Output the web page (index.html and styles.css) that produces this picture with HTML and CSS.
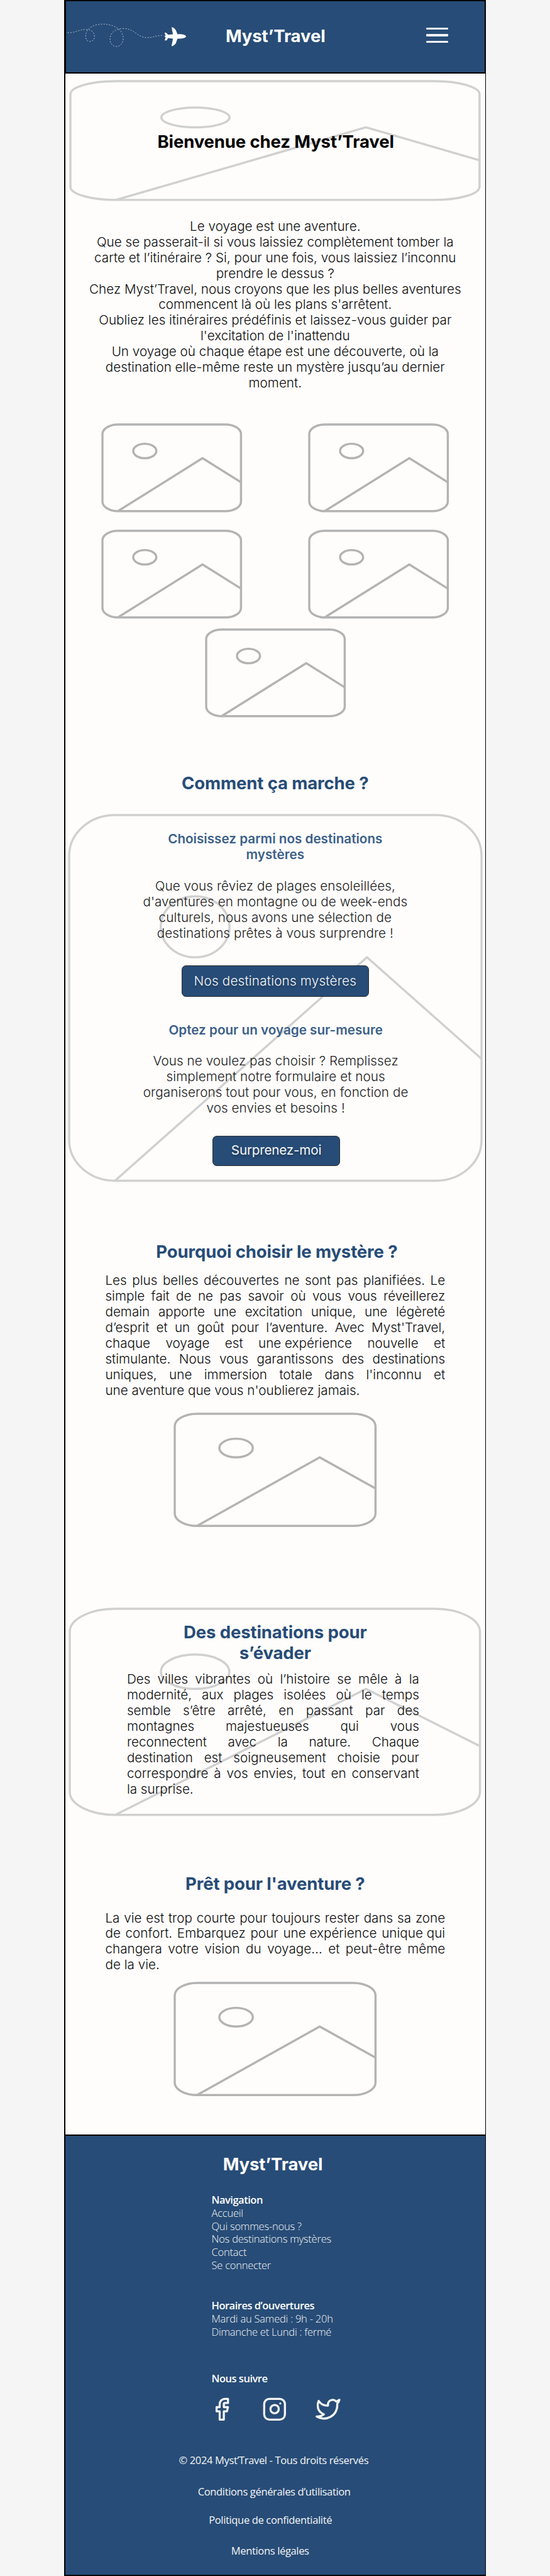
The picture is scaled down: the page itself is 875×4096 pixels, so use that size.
FILE: index.html
```html
<!DOCTYPE html>
<html lang="fr">
<head>
<meta charset="utf-8">
<title>Myst’Travel</title>
<link rel="stylesheet" href="styles.css">
</head>
<body>
<svg class="sprite" aria-hidden="true">
  <symbol id="picture" viewBox="3 3 18 18" preserveAspectRatio="none" overflow="visible">
    <rect x="3" y="3" width="18" height="18" rx="2" ry="2"/>
    <circle cx="8.5" cy="8.5" r="1.5"/>
    <polyline points="21 15 16 10 5 21"/>
  </symbol>
</svg>
<div class="page">
  <header class="header">
    <svg class="flight" viewBox="18 0 702 210" aria-hidden="true">
      <path class="trail" d="M12 88C60 98 85 74 125 73C160 71 176 90 176 112C176 130 164 140 149 139C134 138 126 126 127 109C128 60 180 42 228 43C280 45 334 70 335 122C334 150 318 168 297 167C274 166 262 148 262 124C264 90 290 68 340 67C395 68 415 118 468 118C500 118 515 107 550 106"/>
      <path class="plane" d="M684 111C682 119 665 125 636 124L630 140L627 150L620 157L610 165L603 165L611 124L584 120L576 133L565 133L570 117L568 112L561 111L568 108L570 106L564 91L573 91L584 102L611 99L603 61L610 61L620 68L627 77L630 84L636 99C665 98 680 103 684 111Z"/>
    </svg>
    <div class="logo">Myst’Travel</div>
    <div class="burger"><i></i><i></i><i></i></div>
  </header>

  <main>
    <section class="framed hero">
      <svg class="picture"><use href="#picture"/></svg>
      <h1>Bienvenue chez Myst’Travel</h1>
    </section>

    <p class="intro">Le voyage est une aventure.<br>Que se passerait-il si vous laissiez complètement tomber la<br>carte et l’itinéraire ? Si, pour une fois, vous laissiez l’inconnu<br>prendre le dessus ?<br>Chez Myst’Travel, nous croyons que les plus belles aventures<br>commencent là où les plans s'arrêtent.<br>Oubliez les itinéraires prédéfinis et laissez-vous guider par<br>l'excitation de l'inattendu<br>Un voyage où chaque étape est une découverte, où la<br>destination elle-même reste un mystère jusqu’au dernier<br>moment.</p>

    <div class="gallery">
      <div class="thumb"><svg class="picture"><use href="#picture"/></svg></div>
      <div class="thumb"><svg class="picture"><use href="#picture"/></svg></div>
      <div class="thumb"><svg class="picture"><use href="#picture"/></svg></div>
      <div class="thumb"><svg class="picture"><use href="#picture"/></svg></div>
      <div class="thumb last"><svg class="picture"><use href="#picture"/></svg></div>
    </div>

    <h2 class="how-title">Comment ça marche ?</h2>
    <section class="framed how">
      <svg class="picture"><use href="#picture"/></svg>
      <h3>Choisissez parmi nos destinations<br>mystères</h3>
      <p>Que vous rêviez de plages ensoleillées,<br>d'aventures en montagne ou de week-ends<br>culturels, nous avons une sélection de<br>destinations prêtes à vous surprendre !</p>
      <a class="button wide">Nos destinations mystères</a>
      <h3 class="custom">Optez pour un voyage sur-mesure</h3>
      <p class="custom">Vous ne voulez pas choisir ? Remplissez<br>simplement notre formulaire et nous<br>organiserons tout pour vous, en fonction de<br>vos envies et besoins !</p>
      <a class="button narrow">Surprenez-moi</a>
    </section>

    <section class="why">
      <h2>Pourquoi choisir le mystère ?</h2>
      <p class="justified">Les plus belles découvertes ne sont pas planifiées. Le simple fait de ne pas savoir où vous vous réveillerez demain apporte une excitation unique, une légèreté d’esprit et un goût pour l’aventure. Avec Myst'Travel, chaque voyage est <span class="tied">une expérience</span> nouvelle et stimulante. Nous vous garantissons des destinations uniques, une immersion totale dans l'inconnu et une&nbsp;aventure que vous n'oublierez jamais.</p>
      <div class="photo"><svg class="picture"><use href="#picture"/></svg></div>
    </section>

    <section class="framed escape">
      <svg class="picture"><use href="#picture"/></svg>
      <h2>Des destinations pour<br>s’évader</h2>
      <p class="justified"><span class="line">Des villes vibrantes où l’histoire se mêle à la</span> <span class="line">modernité, aux plages isolées où le temps</span> <span class="line">semble s’être arrêté, en passant par des</span> <span class="line">montagnes majestueuses qui vous</span> <span class="line">reconnectent avec la nature. Chaque</span> <span class="line">destination est soigneusement choisie pour</span> <span class="line">correspondre à vos envies, tout en conservant</span> la surprise.</p>
    </section>

    <section class="ready">
      <h2>Prêt pour l'aventure ?</h2>
      <p class="justified">La vie est trop courte pour toujours rester dans sa zone de confort. Embarquez pour <span class="tied">une expérience</span> <span class="tied">unique qui</span> changera votre vision du voyage… et peut-être même de la vie.</p>
      <div class="photo"><svg class="picture"><use href="#picture"/></svg></div>
    </section>
  </main>

  <footer class="footer">
    <div class="logo">Myst’Travel</div>
    <ul class="links">
      <li class="heading">Navigation</li>
      <li>Accueil</li>
      <li>Qui sommes-nous ?</li>
      <li>Nos destinations mystères</li>
      <li>Contact</li>
      <li>Se connecter</li>
    </ul>
    <ul class="links hours">
      <li class="heading">Horaires d’ouvertures</li>
      <li>Mardi au Samedi : 9h - 20h</li>
      <li>Dimanche et Lundi : fermé</li>
    </ul>
    <ul class="links follow"><li class="heading">Nous suivre</li></ul>
    <div class="social">
      <svg viewBox="0 0 24 24"><path d="M18 2h-3a5 5 0 0 0-5 5v3H7v4h3v8h4v-8h3l1-4h-4V7a1 1 0 0 1 1-1h3z"/></svg>
      <svg viewBox="0 0 24 24"><rect x="2" y="2" width="20" height="20" rx="5"/><path d="M16 11.37A4 4 0 1 1 12.63 8 4 4 0 0 1 16 11.37zM17.5 6.5h.01"/></svg>
      <svg viewBox="0 0 24 24"><path d="M23 3a10.9 10.9 0 0 1-3.14 1.53 4.48 4.48 0 0 0-7.86 3v1A10.66 10.66 0 0 1 3 4s-4 9 5 13a11.64 11.64 0 0 1-7 2c9 5 20 0 20-11.5a4.5 4.5 0 0 0-.08-.83A7.72 7.72 0 0 0 23 3z"/></svg>
    </div>
    <p class="legal copyright">© 2024 Myst’Travel - Tous droits réservés</p>
    <p class="legal terms">Conditions générales d’utilisation</p>
    <p class="legal privacy">Politique de confidentialité</p>
    <p class="legal mentions">Mentions légales</p>
  </footer>
</div>
</body>
</html>
```
FILE: styles.css
```css
/* 1rem is ten design units */
html { font-size: 8.61px; }
* { box-sizing: border-box; margin: 0; padding: 0; }
body {
  background: #f5f5f5;
  color: #0c0c0c;
  font: 300 2.4rem/2.9rem Inter, "Liberation Sans", sans-serif;
}
.sprite { position: absolute; width: 0; height: 0; }

.page {
  width: 77.9rem;
  height: 4096px;
  margin-left: 11.9rem;
  background: #fefdfc;
  border: solid #000;
  border-width: 0 1px 0 2px;
  display: flex;
  flex-direction: column;
}
main { display: flex; flex-direction: column; align-items: center; text-align: center; margin-left: -1px; }
h1, h2, .logo { font-weight: 700; font-size: 3.2rem; line-height: 3.9rem; letter-spacing: -.005em; }
h1 { color: #000; }
h2 { color: #274c77; }
h3 { color: #3b6089; font-weight: 600; font-size: 2.4rem; line-height: 2.9rem; }

.header {
  height: 13.6rem;
  margin: 0 -1px 0 -2px;
  padding: 0 6.8rem .6rem 0;
  border: 2px solid #000;
  border-left-width: 3px;
  background: #274c77;
  display: flex;
  align-items: center;
}
.flight { width: 23.4rem; height: 7rem; flex: none; }
.trail { fill: none; stroke: #e3e8ee; stroke-width: 2.6; stroke-dasharray: 7 8; }
.plane { fill: #fff; }
.logo { color: #fff; }
.header .logo { margin-left: 6.05rem; padding-top: .36rem; }
.burger { margin-left: auto; width: 4rem; display: grid; gap: .8rem; }
.burger i { height: .4rem; border-radius: .15rem; background: #f5f5f5; }

.picture {
  display: block;
  width: 100%;
  height: 100%;
  overflow: visible;
  fill: none;
  stroke: #b3b3b3;
  stroke-width: .4rem;
  stroke-linecap: butt;
  stroke-linejoin: round;
}
#picture * { vector-effect: non-scaling-stroke; }

/* Sections whose content lies over a picture */
.framed { position: relative; display: flex; flex-direction: column; align-items: center; }
.framed > .picture {
  position: absolute;
  inset: .2rem;
  width: calc(100% - .4rem);
  height: calc(100% - .4rem);
  stroke: #d0d0d0;
}
.framed > :not(.picture) { position: relative; }

.hero { width: 76rem; height: 22.34rem; margin-top: 1.23rem; padding-top: 9.49rem; }
.hero h1 { left: .1rem; }
.intro { margin-top: 3.21rem; }

.gallery {
  margin-top: 5.95rem;
  display: grid;
  grid-template-columns: 26rem 26rem;
  grid-template-rows: 16.4rem 16.4rem 16.4rem;
  column-gap: 12.2rem;
  row-gap: 3.2rem;
}
.thumb, .photo { padding: .2rem; }
.thumb.last { grid-column: 1 / 3; width: 26rem; justify-self: center; margin: -1.4rem 0 1.4rem; }

.how-title { margin-top: 8.95rem; }
.how { width: 76.6rem; height: 67.93rem; margin-top: 3.68rem; padding-top: 3.18rem; }
.how p { margin-top: 2.9rem; color: #202020; letter-spacing: .003em; }
.how h3.custom { margin-top: 4.75rem; left: .1rem; }
.how p.custom { left: .1rem; }
.button {
  display: flex;
  align-items: center;
  justify-content: center;
  border: 1px solid #2c2c2c;
  border-radius: .8rem;
  background: #274c77;
  color: #f5f5f5;
  text-shadow: 0 .4rem .4rem rgba(0, 0, 0, .25);
}
.button.wide { width: 34.6rem; height: 5.73rem; margin-top: 4.49rem; letter-spacing: .01em; }
.button.narrow { width: 23.5rem; height: 5.5rem; margin-top: 3.58rem; left: .2rem; font-weight: 400; letter-spacing: -.01em; }

.justified { text-align: justify; width: 62.8rem; }
.tied { display: inline-block; }
.line { display: block; text-align-last: justify; }
.photo { width: 37.5rem; height: 21.1rem; }
.why, .ready { display: flex; flex-direction: column; align-items: center; }
.why { margin-top: 11.01rem; }
.why h2 { padding-left: .6rem; }
.why .justified { margin-top: 1.87rem; }
.why .photo { margin-top: 2.58rem; }

.escape { width: 76.2rem; height: 38.47rem; margin-top: 14.92rem; padding-top: 2.66rem; }
.escape .justified { width: 54rem; margin-top: 1.42rem; left: -.4rem; }

.ready { margin-top: 10.69rem; }
.ready .justified { margin-top: 2.88rem; }
.ready .photo { margin-top: 1.63rem; }

.footer {
  flex: 1;
  margin-top: 7.06rem;
  padding: 3.35rem 0 0;
  border: solid #000;
  border-width: 2px 0;
  background: #274c77;
  color: #f5f5f5;
  font: 300 1.92rem/2.4rem "Open Sans", "Noto Sans", sans-serif;
  letter-spacing: -.014em;
}
.footer .logo { font-family: Inter, sans-serif; text-align: center; padding-right: 1rem; }
.links { list-style: none; margin: 3.5rem 0 0 26.95rem; }
.links .heading { font-weight: 600; letter-spacing: -.03em; color: #fff; }
.links.hours { margin-top: 5.1rem; }
.links.follow { margin-top: 6.3rem; }
.social { display: flex; gap: 5.25rem; margin: 2.11rem 0 0 26.5rem; }
.social svg {
  width: 4.6rem;
  height: 4.6rem;
  overflow: visible;
  fill: none;
  stroke: #f5f5f5;
  stroke-width: 2;
  stroke-linecap: round;
  stroke-linejoin: round;
}
.legal { text-align: center; font-weight: 400; letter-spacing: -.021em; }
.copyright { margin-top: 5.99rem; padding-right: .7rem; }
.terms { margin-top: 3.4rem; padding-right: .5rem; }
.privacy { margin-top: 2.8rem; padding-right: 1.9rem; }
.mentions { margin-top: 3.27rem; padding-right: 2rem; }
```
